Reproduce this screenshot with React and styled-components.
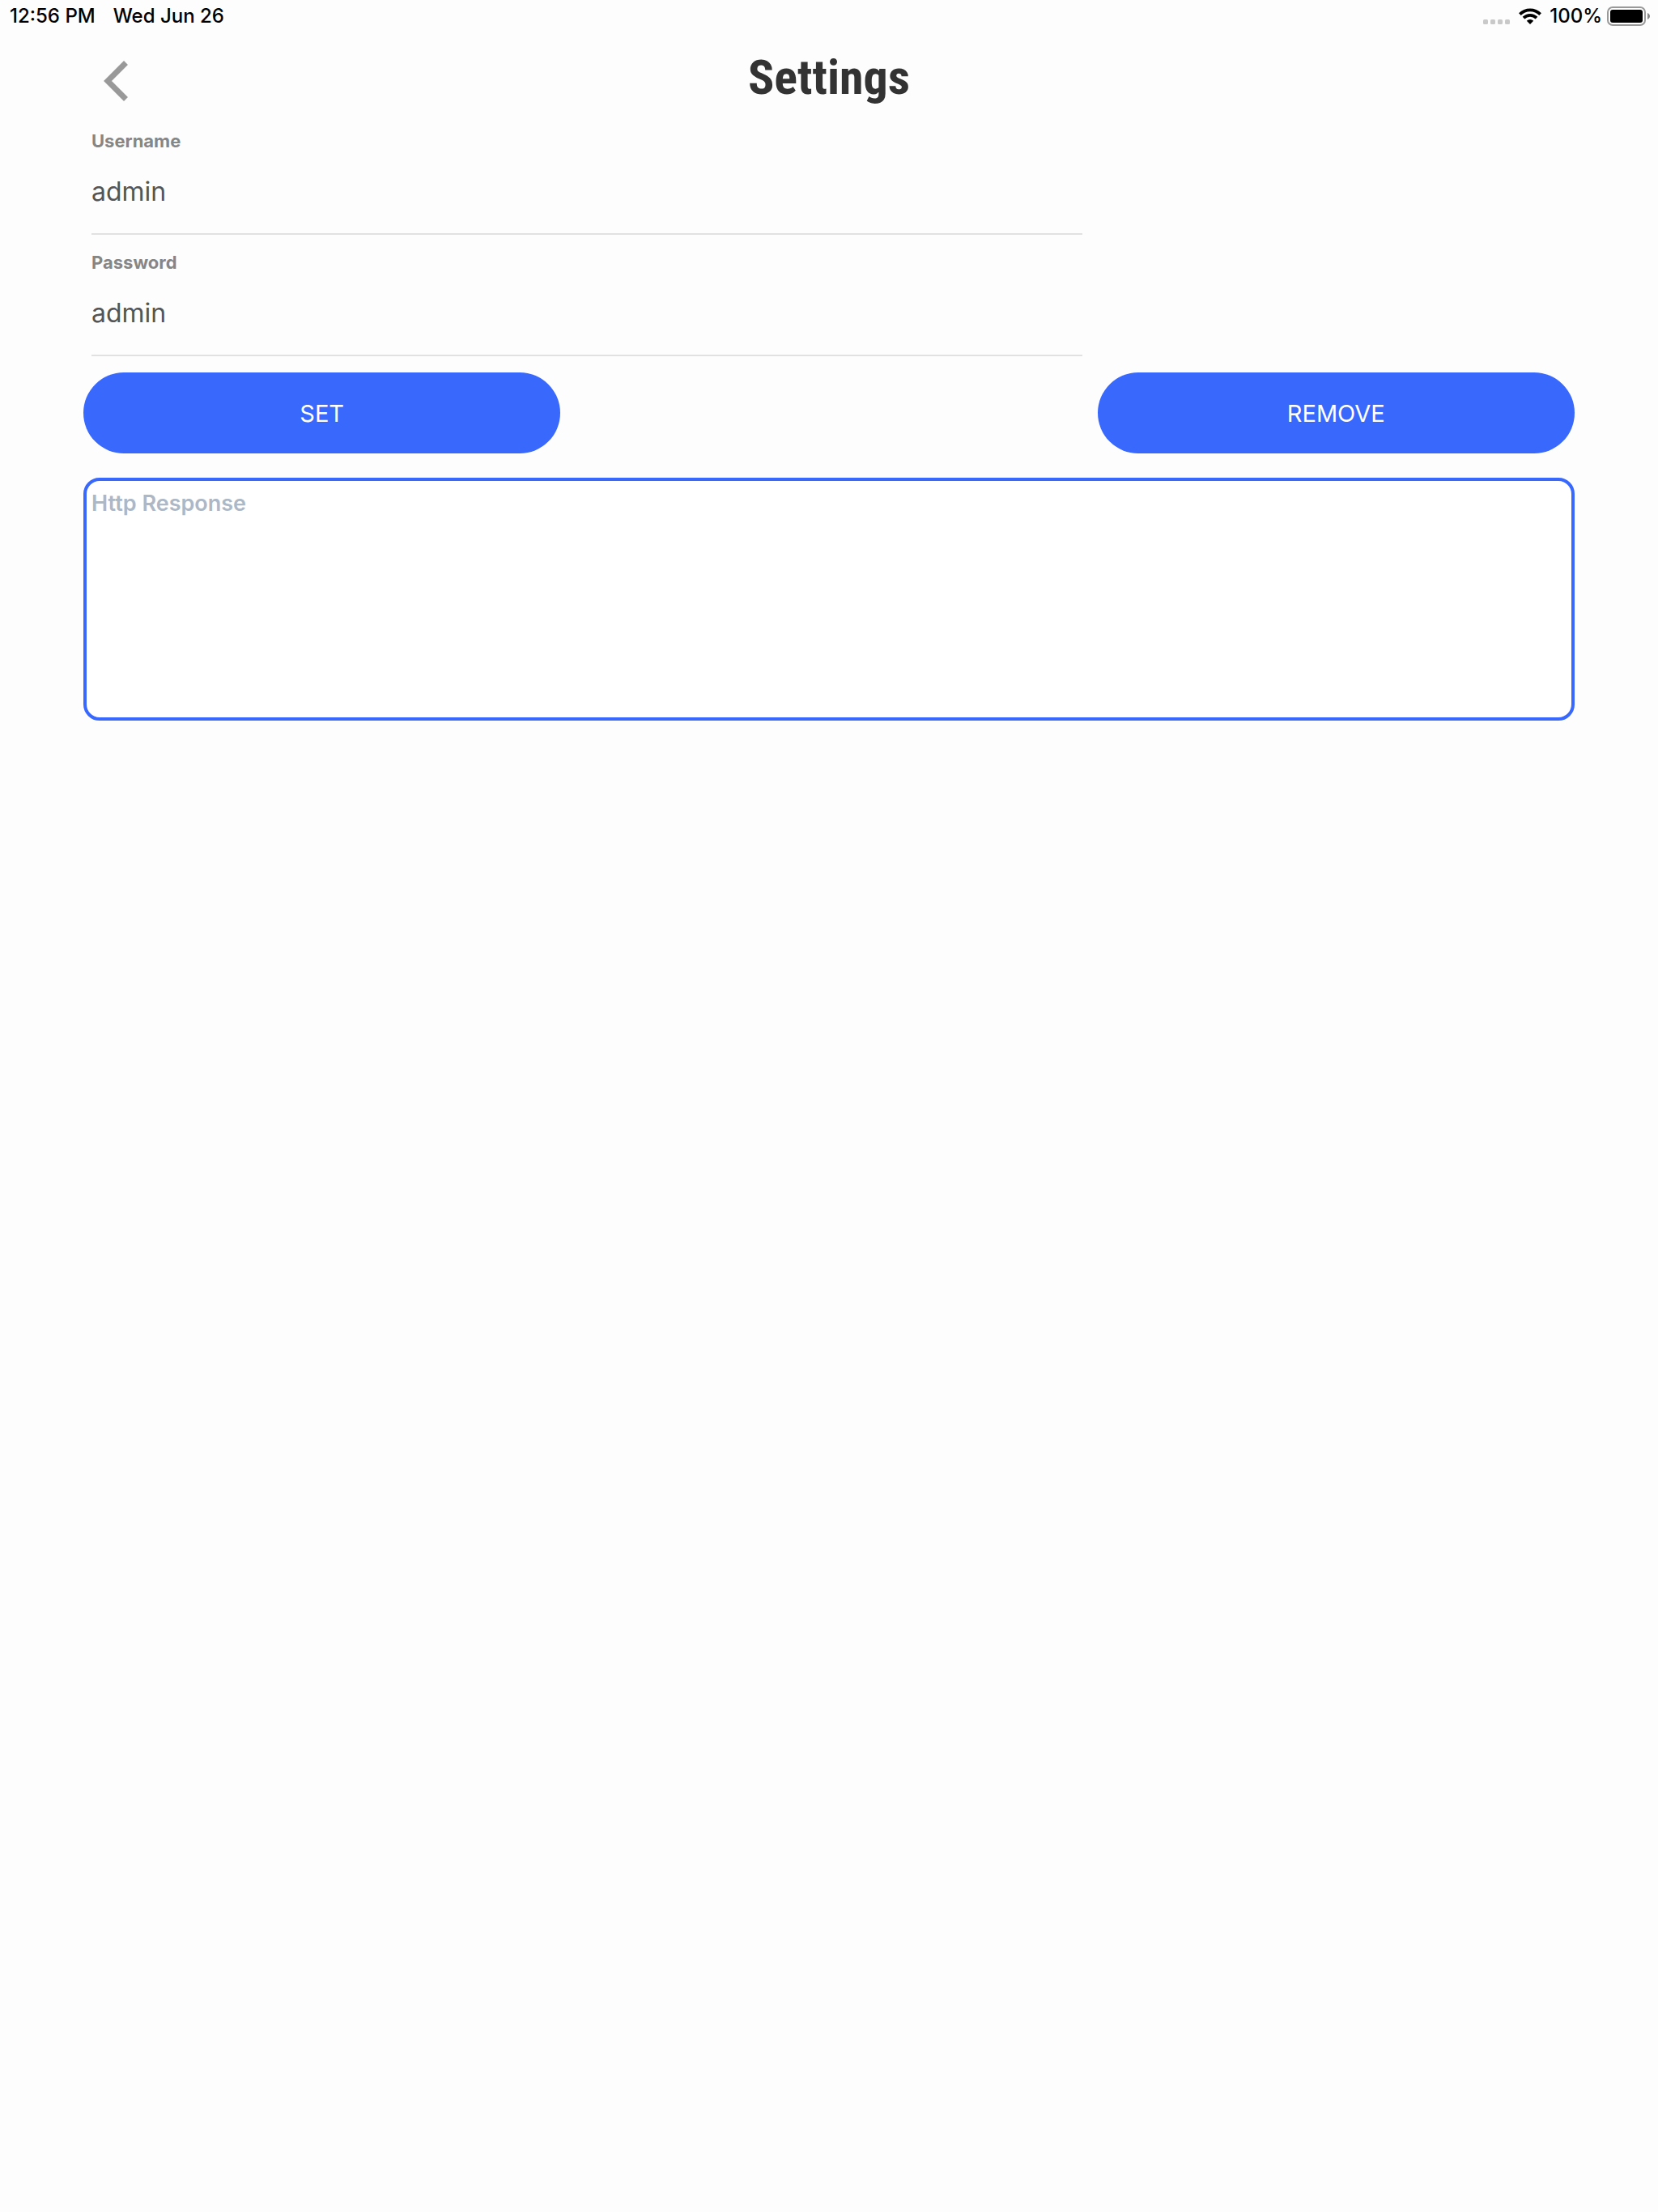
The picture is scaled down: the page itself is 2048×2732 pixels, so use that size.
import React, { useState } from "react";
import styled, { createGlobalStyle } from "styled-components";

const GlobalStyle = createGlobalStyle`
  *, *::before, *::after { box-sizing: border-box; }
  body {
    margin: 0;
    background: #fdfdfd;
    font-family: Inter, "Liberation Sans", sans-serif;
  }
`;

const Screen = styled.div`
  min-height: 100vh;
  background: #fdfdfd;
`;

const StatusBar = styled.header`
  display: flex;
  justify-content: space-between;
  align-items: center;
  height: 40px;
  padding: 0 10px 0 12px;
  color: #000;
  font-size: 24px;
  line-height: 40px;
  font-weight: 500;
`;

const StatusGroup = styled.div`
  display: flex;
  align-items: center;
  gap: ${(p) => p.$gap}px;
`;

const Icon = styled.svg`
  display: block;
  flex: none;
`;

const Content = styled.main`
  display: flex;
  flex-direction: column;
  padding: 0 103px;
`;

const TitleBar = styled.div`
  display: grid;
  grid-template-columns: 1fr auto 1fr;
  align-items: center;
  height: 100px;
  padding-top: 20px;
`;

const BackButton = styled.button`
  justify-self: start;
  display: flex;
  padding: 0 25px;
  border: 0;
  background: none;
  cursor: pointer;
`;

const Title = styled.h1`
  margin: 0;
  padding-bottom: 8px;
  color: #333;
  font-family: "Roboto Condensed", Roboto, sans-serif;
  font-size: 60px;
  line-height: 72px;
  font-weight: 700;
`;

const Fields = styled.form`
  display: flex;
  flex-direction: column;
  width: 67%;
  padding: 0 0 20px 10px;
`;

const Field = styled.div`
  display: flex;
  flex-direction: column;
  height: 150px;
  padding-top: 20px;
`;

const Label = styled.label`
  height: 28px;
  color: #868686;
  font-size: 22px;
  line-height: 28px;
  font-weight: 700;
`;

const TextInput = styled.input`
  flex: 1;
  min-width: 0;
  padding: 0 0 4px;
  border: 0;
  border-bottom: 2px solid #e1e1e1;
  outline: 0;
  background: none;
  color: #555;
  font-family: inherit;
  font-size: 32px;
  font-weight: 400;
`;

const Actions = styled.div`
  display: flex;
  justify-content: space-between;
  margin-bottom: 30px;
`;

const ActionButton = styled.button`
  width: 32%;
  height: 100px;
  border: 0;
  border-radius: 50px;
  background: #3968fc;
  color: #fff;
  font-family: inherit;
  font-size: 29px;
  font-weight: 400;
  cursor: pointer;
`;

const Response = styled.textarea`
  display: block;
  width: 100%;
  height: 300px;
  padding: 10px 6px;
  border: 4px solid #3968fc;
  border-radius: 20px;
  outline: 0;
  resize: none;
  background: #fff;
  color: #555;
  font-family: inherit;
  font-size: 27px;
  line-height: 36px;
  font-weight: 600;
  &::placeholder { color: #adb8c6; opacity: 1; }
`;

const BatteryLevel = styled.span`
  display: flex;
  align-items: center;
  gap: 6px;
`;

function SignalDots() {
  return (
    <Icon width="34" height="24" viewBox="0 0 34 24" aria-hidden="true">
      {[0, 9, 18, 27].map((x) => (
        <rect key={x} x={x} y="16" width="6" height="6" rx="1.6" fill="#c9c9c9" />
      ))}
    </Icon>
  );
}

function WifiIcon() {
  return (
    <Icon width="28" height="20" viewBox="0 0 28 20" aria-label="Wi-Fi">
      <g fill="none" stroke="#000" strokeWidth="3.8">
        <path d="M1.4 7.6A17.8 17.8 0 0 1 26.6 7.6" />
        <path d="M6 12.2A11.4 11.4 0 0 1 22 12.2" />
      </g>
      <path d="M14 20l-4.2-4.3a6.2 6.2 0 0 1 8.4 0z" />
    </Icon>
  );
}

function BatteryIcon() {
  return (
    <Icon width="53" height="24" viewBox="0 0 53 24" aria-label="Battery full">
      <rect x="1" y="1" width="46" height="22" rx="6" fill="none" stroke="#999" strokeWidth="2" />
      <rect x="4" y="4" width="40" height="16" rx="3" />
      <path d="M50 8c4 1.500 4 6.500 0 8z" fill="#888" />
    </Icon>
  );
}

export default function App() {
  const [username, setUsername] = useState("admin");
  const [password, setPassword] = useState("admin");
  const [response, setResponse] = useState("");

  return (
    <Screen>
      <GlobalStyle />
      <StatusBar>
        <StatusGroup $gap={22}>
          <span>12:56 PM</span>
          <span>Wed Jun 26</span>
        </StatusGroup>
        <StatusGroup $gap={10}>
          <SignalDots />
          <WifiIcon />
          <BatteryLevel>
            100%
            <BatteryIcon />
          </BatteryLevel>
        </StatusGroup>
      </StatusBar>
      <Content>
        <TitleBar>
          <BackButton type="button" aria-label="Back">
            <Icon width="32" height="50" viewBox="0 0 32 50">
              <path d="M27.500 2.500L5 25l22.500 22.500" fill="none" stroke="#999" strokeWidth="7" />
            </Icon>
          </BackButton>
          <Title>Settings</Title>
        </TitleBar>
        <Fields>
          <Field>
            <Label htmlFor="username">Username</Label>
            <TextInput id="username" value={username} onChange={(e) => setUsername(e.target.value)} />
          </Field>
          <Field>
            <Label htmlFor="password">Password</Label>
            <TextInput id="password" value={password} onChange={(e) => setPassword(e.target.value)} />
          </Field>
        </Fields>
        <Actions>
          <ActionButton type="button">SET</ActionButton>
          <ActionButton type="button">REMOVE</ActionButton>
        </Actions>
        <Response
          aria-label="Http Response"
          placeholder="Http Response"
          value={response}
          onChange={(e) => setResponse(e.target.value)}
        />
      </Content>
    </Screen>
  );
}
